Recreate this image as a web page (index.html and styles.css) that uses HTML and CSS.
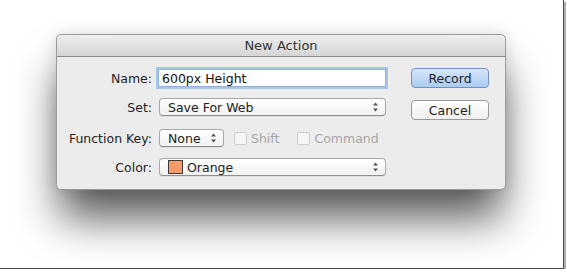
FILE: index.html
```html
<!DOCTYPE html>
<html lang="en">
<head>
  <meta charset="UTF-8">
  <meta name="viewport" content="width=device-width, initial-scale=1.0">
  <title>New Action</title>
  <link rel="stylesheet" href="styles.css">
</head>
<body>

  <div class="frame">
    <div class="window">
      <div class="titlebar">New Action</div>

      <div class="content">
        <div class="form">
          <!-- Name -->
          <div class="row">
            <label class="label" for="actionName">Name:</label>
            <input type="text" id="actionName" class="textfield" value="600px Height">
          </div>

          <!-- Set -->
          <div class="row row-set">
            <div class="label">Set:</div>
            <div class="popup wide">
              <span>Save For Web</span>
              <svg class="arrows" width="7" height="10" viewBox="0 0 7 10"><path d="M3.5 0.5 L6 3.5 L1 3.5 Z M3.5 9.5 L6 6.5 L1 6.5 Z" fill="#555"/></svg>
            </div>
          </div>

          <!-- Function Key -->
          <div class="row row-key">
            <div class="label">Function Key:</div>
            <div class="popup small">
              <span>None</span>
              <svg class="arrows" width="7" height="10" viewBox="0 0 7 10"><path d="M3.5 0.5 L6 3.5 L1 3.5 Z M3.5 9.5 L6 6.5 L1 6.5 Z" fill="#555"/></svg>
            </div>
            <span class="check disabled"><span class="box"></span>Shift</span>
            <span class="check disabled"><span class="box"></span>Command</span>
          </div>

          <!-- Color -->
          <div class="row row-color">
            <div class="label">Color:</div>
            <div class="popup wide">
              <span class="swatch"></span>
              <span>Orange</span>
              <svg class="arrows" width="7" height="10" viewBox="0 0 7 10"><path d="M3.5 0.5 L6 3.5 L1 3.5 Z M3.5 9.5 L6 6.5 L1 6.5 Z" fill="#555"/></svg>
            </div>
          </div>
        </div>

        <!-- Buttons -->
        <div class="buttons">
          <button class="btn default">Record</button>
          <button class="btn">Cancel</button>
        </div>
      </div>
    </div>
  </div>

</body>
</html>
```
FILE: styles.css
```css
body {
  margin: 0;
  padding: 0;
  background: #fff;
  font-family: "DejaVu Sans", "Noto Sans", sans-serif;
  font-size: 12.5px;
  color: #222;
}
.frame {
  width: 564px;
  height: 269px;
  padding-top: 34px;
  box-sizing: border-box;
  background: #fff;
  border-right: 1px solid #4a4a4a;
  border-bottom: 1px solid #4a4a4a;
  box-shadow: 2px 2px 1px rgba(0, 0, 0, 0.3);
}
.window {
  width: 448px;
  margin-left: 56px;
  background: #ececec;
  border: 1px solid #9a9a9a;
  border-radius: 5px;
  box-shadow: 0 32px 44px -4px rgba(0, 0, 0, 0.66), 0 0 16px rgba(0, 0, 0, 0.12);
}
.titlebar {
  height: 21px;
  line-height: 21px;
  text-align: center;
  color: #333;
  font-size: 13px;
  background: linear-gradient(#eeeeee, #d5d5d5);
  border-bottom: 1px solid #8c8c8c;
  border-radius: 5px 5px 0 0;
}
.content {
  display: flex;
  gap: 25px;
  padding: 10px 16px 11px 9px;
}
.form {
  width: 320px;
  display: flex;
  flex-direction: column;
}
.row {
  display: flex;
  align-items: center;
  gap: 6px;
  height: 22px;
}
.row-set { margin-top: 7px; }
.row-key { margin-top: 9px; }
.row-color { margin-top: 7px; }
.label {
  width: 86px;
  flex-shrink: 0;
  text-align: right;
  color: #222;
}
.textfield {
  width: 228px;
  height: 18px;
  box-sizing: border-box;
  margin: 0;
  padding: 0 3px;
  border: 1px solid #8fb1d9;
  outline: none;
  box-shadow: 0 0 0 2px #a6c6ec;
  font-family: inherit;
  font-size: 12.5px;
  color: #111;
  background: #fff;
}
.popup {
  display: flex;
  align-items: center;
  gap: 4px;
  height: 18px;
  box-sizing: border-box;
  flex-shrink: 0;
  margin-left: 1px;
  padding: 0 6px 0 8px;
  border: 1px solid #a8a8a8;
  border-bottom-color: #8e8e8e;
  border-radius: 4px;
  background: linear-gradient(#ffffff, #f1f1f1);
  box-shadow: 0 1px 0 rgba(0, 0, 0, 0.06);
}
.popup.wide {
  width: 227px;
}
.popup.small {
  width: 65px;
  margin-right: 4px;
}
.popup .arrows {
  margin-left: auto;
}
.swatch {
  width: 15px;
  height: 14px;
  box-sizing: border-box;
  background: #f79a6a;
  border: 1px solid #3a3a3a;
}
.check {
  display: flex;
  align-items: center;
  flex-shrink: 0;
  gap: 4px;
  margin-right: 12px;
}
.check:last-child {
  margin-right: 0;
}
.check .box {
  width: 13px;
  height: 13px;
  box-sizing: border-box;
  border: 1px solid #cfcfcf;
  border-radius: 2px;
  background: #f5f5f5;
}
.check.disabled {
  color: #a6a6a6;
}
.buttons {
  display: flex;
  flex-direction: column;
  gap: 12px;
  padding-top: 1px;
}
.btn {
  width: 78px;
  height: 20px;
  margin: 0;
  padding: 0;
  font-family: inherit;
  font-size: 12.5px;
  color: #222;
  border: 1px solid #9a9a9a;
  border-radius: 4px;
  background: linear-gradient(#ffffff, #f0f0f0);
}
.btn.default {
  border-color: #6f93c7;
  background: linear-gradient(#d7e7f9, #a9cbf1);
}
```
